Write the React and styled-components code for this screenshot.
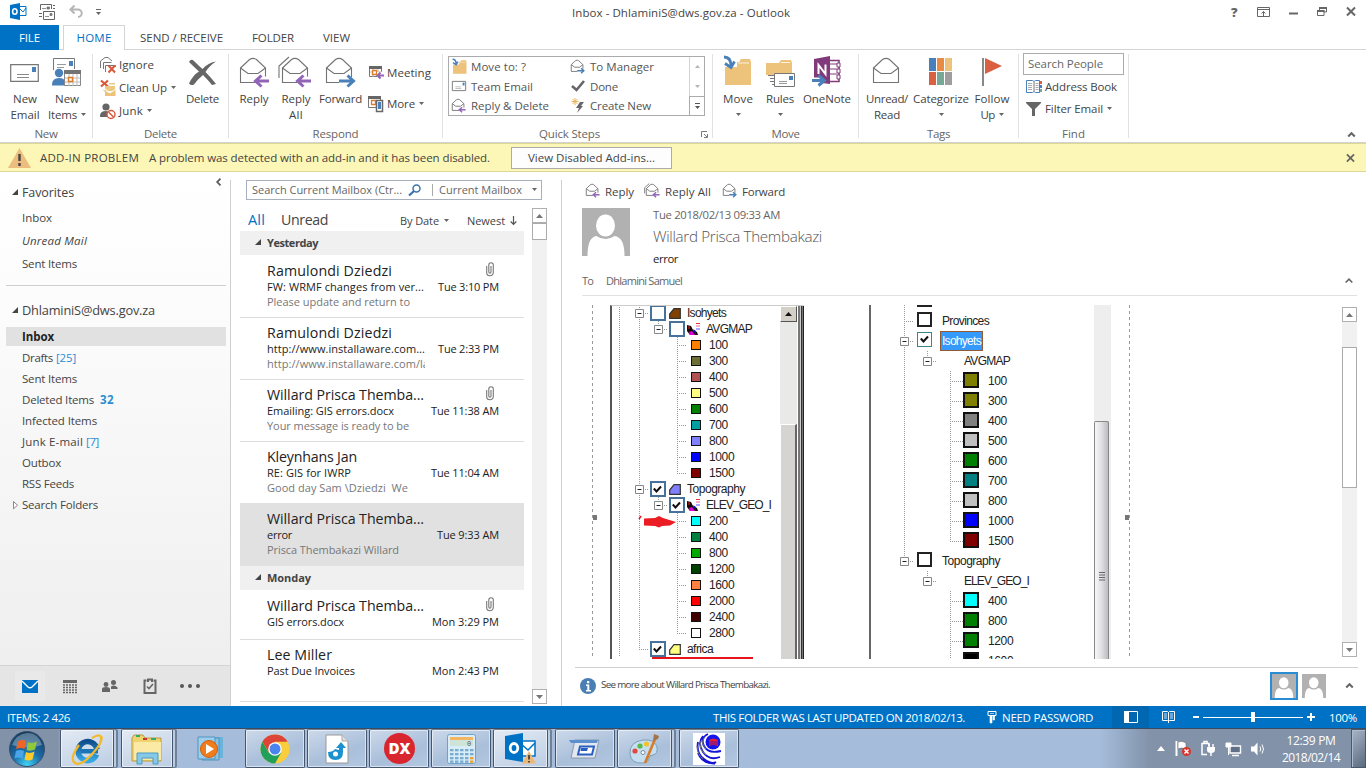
import React, { useLayoutEffect, useRef } from "react";
import styled, { createGlobalStyle, css } from "styled-components";

const GlobalStyle = createGlobalStyle`
  * { box-sizing: border-box; }
  body { margin: 0; overflow: hidden; background: #fff; }
  body, button { font-family: "Open Sans", "Noto Sans", sans-serif; font-size: 11.5px; color: #444; }
`;

/* ---------- text ---------- */
const Txt = styled.span`
  display: inline-block;
  flex: none;
  justify-self: start;
  white-space: pre;
  font-size: ${(p) => p.$size || 11.5}px;
  font-weight: ${(p) => p.$weight || 400};
  font-style: ${(p) => (p.$italic ? "italic" : "normal")};
  color: ${(p) => p.$color || "inherit"};
  ${(p) => p.$family && css`font-family: ${p.$family};`}
`;

function Text({ w, children, ...rest }) {
  const ref = useRef(null);
  useLayoutEffect(() => {
    const el = ref.current;
    if (!w || !el) return;
    el.style.letterSpacing = "0px";
    const natural = el.getBoundingClientRect().width;
    el.style.letterSpacing = (w - natural) / el.textContent.length + "px";
  }, [w, children]);
  return <Txt ref={ref} {...rest}>{children}</Txt>;
}

const Svg = styled.svg`
  display: block;
  flex: none;
  overflow: visible;
`;

const Caret = ({ c = "#666" }) => (
  <Svg width="5" height="3" viewBox="0 0 5 3"><path d="M0 0h5L2.500 3z" fill={c} /></Svg>
);

/* ---------- icons ---------- */
const OpenMail = ({ w = 26, arrow, all, fill = "#fff" }) => {
  const small = w < 20;
  const sw = small ? 1.9 : 1.1;
  return (
    <Svg width={w + (small ? 2 : 3)} height={w + (small ? 1 : 4)} viewBox={small ? "0 0 32 30" : "0 0 29 30"}>
      {all && <path d="M-3 20V8L7 -1" fill="none" stroke="#737373" strokeWidth={sw} />}
      <path d="M.5 10 9.500 1.500Q13 -.8 16.500 1.500L25.500 10V24.500H.5z" fill={fill} stroke="#737373" strokeWidth={sw} />
      <path d="M.5 10 8 15.500h10L25.500 10" fill="none" stroke="#737373" strokeWidth={sw} />
      {arrow === "left" && <g><path d="M15 18.500h15v9H15z" fill={fill} /><path d="M29 23H16M21.500 17.500 15.500 23l6 5.500" fill="none" stroke="#9264b8" strokeWidth="3" /></g>}
      {arrow === "right" && <g><path d="M13 19h14v9H13z" fill={fill} /><path d="M13 23h14M21.500 17.500l6 5.500-6 5.500" fill="none" stroke="#4a80b9" strokeWidth="3" /></g>}
    </Svg>
  );
};
const Mail = ({ w = 29, h = 18 }) => (
  <Svg width={w} height={h} viewBox="0 0 29 18" preserveAspectRatio="none">
    <path d="M.7.7h27.600v16.600H.7z" fill="#fff" stroke="#777" strokeWidth={w < 20 ? 1.8 : 1.2} />
    <path d="M22 3h4v5h-4z" fill="#4a80b9" /><path d="M7 10.500h12M7 13.500h12" stroke="#888" />
  </Svg>
);
const NewItems = () => (
  <Svg width="29" height="29" viewBox="0 0 29 29">
    <path d="M1.500 12V.5h21V11" fill="#fff" stroke="#777" /><path d="M17 3h4v5h-4z" fill="#4a80b9" />
    <path d="M5 6.500h9M5 9.500h7" stroke="#999" />
    <circle cx="7" cy="15" r="4.200" fill="#4a80b9" /><path d="M0 27q0-7 7-7 5 0 6 3v4.500H0z" fill="#4a80b9" />
    <path d="M12.500 12.500h16v15h-16z" fill="#fff" stroke="#888" /><path d="M12 12h17v4H12z" fill="#737373" />
    <path d="M13 20h15M13 24h15M17 16v12M21 16v12M25 16v12" stroke="#bbb" /><path d="M16.500 19.500h4v4h-4z" fill="#fff" stroke="#e07b28" strokeWidth="1.500" />
  </Svg>
);
const IgnoreIcon = () => (
  <Svg width="16" height="16" viewBox="0 0 16 16"><path d="M.5 11V4L5 .5h3L12 4" fill="none" stroke="#777" /><path d="M3.500 12V5.500h8M5.500 15V8.500h10V10" fill="none" stroke="#777" />
    <path d="m8.500 8.500 6.500 7m0-7-6.500 7" stroke="#d9583b" strokeWidth="2" /></Svg>
);
const CleanIcon = () => (
  <Svg width="16" height="16" viewBox="0 0 16 16"><path d="M1 .5l7 6m0-6-7 6" stroke="#d9583b" strokeWidth="2.200" /><path d="M9 3h6v1.500H9z" fill="#edc880" /><path d="M5 6h10v5H5z" fill="#edc880" /><path d="m2 9 7 4 6.500-3.500V16H5V12z" fill="#edc27a" /><path d="m5 9 5 4 6-4" fill="none" stroke="#fff" /></Svg>
);
const JunkIcon = () => (
  <Svg width="16" height="16" viewBox="0 0 16 16"><circle cx="6" cy="4" r="3.600" fill="#666" /><path d="M0 13q0-5 6-5l4 1-3 5H0z" fill="#666" /><circle cx="11" cy="11.500" r="4" fill="#fff" stroke="#d9583b" strokeWidth="1.400" /><path d="m8.500 9 5 5" stroke="#d9583b" strokeWidth="1.400" /></Svg>
);
const DeleteIcon = () => (
  <Svg width="29" height="27" viewBox="0 0 29 27"><path d="M1 3Q3-1 6 2q5 5 8.500 8Q21 3 28 2.500 21 7 17.500 13q5 5 10.500 12l-4 1q-4-5-9-10-6 5-9 9.500-3 1.500-5-1Q5 16 11 12.500 6 8 1 3z" fill="#666" /></Svg>
);
const MeetingIcon = () => (
  <Svg width="15" height="14" viewBox="0 0 15 14"><path d="M.5.5h12v10H.5z" fill="#fff" stroke="#777" /><path d="M0 0h13v3H0z" fill="#666" /><path d="M4 3v8M9 3v8M1 6h12" stroke="#bbb" /><path d="M3.500 4.500h4v4h-4z" fill="#fff" stroke="#e07b28" strokeWidth="1.300" /><path d="M8 6h7v7H8z" fill="#fff" /><path d="M15 9.500H9M11.500 6.500 8.500 9.500l3 3" fill="none" stroke="#9264b8" strokeWidth="2" /></Svg>
);
const MoreIcon = () => (
  <Svg width="16" height="16" viewBox="0 0 16 16"><path d="M.5.5h12v11H.5z" fill="#fff" stroke="#777" /><path d="M0 0h13v3H0z" fill="#666" /><path d="M3.500 4.500h4v4h-4z" fill="#fff" stroke="#e07b28" strokeWidth="1.300" /><path d="M8.500 4.500h6v11h-6z" fill="#fff" stroke="#666" strokeWidth="1.500" /><path d="M10 6h3v7h-3z" fill="#4a80b9" /></Svg>
);
const Folder = ({ w = 29, h = 28 }) => (
  <Svg width={w} height={h} viewBox="0 0 29 28"><path d="M2 28V10h12V5h2l2-3h9l1 3V28z" fill="#edc27a" /><path d="M15 6h11" stroke="#fff" strokeWidth=".8" />
    <path d="M1 0q7 0 7 9M2 6.500l6 4 3.500-6" fill="none" stroke="#4a80b9" strokeWidth="2.800" /></Svg>
);
const RulesIcon = () => (
  <Svg width="31" height="28" viewBox="0 0 31 28"><path d="M1 16V4h13l2-3h10l1 3v12z" fill="#edc27a" /><path d="M16 3.500h9" stroke="#fff" strokeWidth=".8" /><path d="M3 16.500h7M5 19.500h5M5 22.500h5M7 25.500h3" stroke="#777" /><path d="M9.500 14.500h20v13h-20z" fill="#fff" stroke="#777" /><path d="M24 17h4v4h-4z" fill="#4a80b9" /><path d="M14 22.500h8M14 24.500h8" stroke="#999" /></Svg>
);
const OneNoteIcon = () => (
  <Svg width="30" height="30" viewBox="0 0 30 30"><path d="M16 4.500h11v21H16z" fill="#fff" stroke="#80397b" strokeWidth="1.500" /><path d="M18 8h7M18 13h7M18 18h7" stroke="#80397b" /><path d="M25 7h3v4h-3zM25 13h3v4h-3zM25 19h3v4h-3z" fill="#fff" stroke="#80397b" /><path d="M2 3 18 0v28L2 26z" fill="#80397b" /><path d="M6.500 18V9l7 9V8.500" fill="none" stroke="#fff" strokeWidth="2" /><path d="M-1 21.500h9v6h-9z" fill="#fff" /><path d="M0 24.500h12M6.500 19.500l6 5-6 5" fill="none" stroke="#4a80b9" strokeWidth="3" /></Svg>
);
const CategoryIcon = () => (
  <Svg width="23" height="27" viewBox="0 0 23 27">{["#4a80b9", "#e88c43", "#edc27a", "#d96141", "#76a797", "#9f9d9d"].map((c, i) => <rect key={i} x={(i % 3) * 8} y={i > 2 ? 14 : 0} width="7" height="13" fill={c} />)}</Svg>
);
const FlagIcon = () => (<Svg width="20" height="28" viewBox="0 0 20 28"><path d="M1 0v28" stroke="#888" strokeWidth="2" /><path d="M3 0l17 8L3 16z" fill="#d96141" /></Svg>);
const BookIcon = () => (
  <Svg width="17" height="13" viewBox="0 0 17 13"><path d="M.5 12.500V.5h6l1.500 1 1.500-1h4v12h-4L8 11.500l-1.500 1z" fill="#fff" stroke="#4a80b9" /><path d="M8 2v9" stroke="#777" /><path d="M2 3.500h4M2 5.500h4M2 7.500h4M2 9.500h4M9.500 3.500h3M9.500 5.500h3M9.500 7.500h3M9.500 9.500h3" stroke="#aaa" /><path d="M14 1h2v3h-2z" fill="#d96141" /><path d="M14 5h2v3h-2z" fill="#4a80b9" /><path d="M14 9h2v3h-2z" fill="#76a797" /></Svg>
);
const FilterIcon = () => (<Svg width="15" height="14" viewBox="0 0 15 14"><path d="M0 0h15v1L9 7v7H6V7L0 1z" fill="#666" /></Svg>);
const CheckIcon = () => (<Svg width="14" height="12" viewBox="0 0 14 12"><path d="m1 6 4.500 4L13 1" fill="none" stroke="#666" strokeWidth="2.600" /></Svg>);
const BoltIcon = () => (<Svg width="12" height="15" viewBox="0 0 12 15"><path d="M8 4h4L9 8h2l-6 7 2-5H4z" fill="#666" /><path d="M3 0v7M-.5 3.500h7M.5 1l5 5M5.500 1l-5 5" stroke="#e9ad4f" strokeWidth=".9" /></Svg>);
const Chevron = ({ w = 8, sw = 2 }) => (<Svg width={w} height="5" viewBox="0 0 8 5"><path d="M.7 4.500 4 1.200l3.300 3.300" fill="none" stroke="#666" strokeWidth={sw} /></Svg>);
const Cross = ({ w = 10, sw = 2 }) => (<Svg width={w} height={w - 1} viewBox="0 0 10 9"><path d="m1 .5 8 8m0-8-8 8" stroke="#666" strokeWidth={sw} /></Svg>);
const Person = ({ size }) => (
  <Svg width={size} height={size} viewBox="0 0 48 48"><path d="M0 0h48v48H0z" fill="#b1b1b1" /><ellipse cx="23.500" cy="17.500" rx="9.500" ry="11" fill="#fff" /><path d="M5.500 48q0-19 9-20 4 3 9 3t9-3q10 1 10 20z" fill="#fff" /></Svg>
);
const ClipIcon = () => (<Svg width="8" height="15" viewBox="0 0 8 15"><path d="M.7 4v6.500a3.300 3.300 0 0 0 6.600 0V3a2.200 2.200 0 0 0-4.500 0v7a1 1 0 0 0 2.200 0V4" fill="none" stroke="#777" strokeWidth="1.100" /></Svg>);

/* ---------- title bar ---------- */
const Shell = styled.div`width: 1366px; height: 768px; display: flex; flex-direction: column; overflow: hidden;`;
const TitleBar = styled.header`height: 25px; flex: none; display: grid; grid-template-columns: 572px 1fr 136px; align-items: center;`;
const QuickAccess = styled.div`display: flex; align-items: center; padding-left: 10px; gap: 13px; height: 22px; padding-bottom: 2px;`;
const WinButtons = styled.div`display: flex; align-items: center; justify-content: space-between; padding: 0 10px 2px 1px; height: 22px;`;

function Title() {
  return (
    <TitleBar>
      <QuickAccess>
        <Svg width="16" height="17" viewBox="0 0 16 17"><path d="M8 3.500h8v9H8z" fill="#fff" stroke="#0072c6" /><path d="m9 5 4 4 3-4" fill="none" stroke="#0072c6" /><path d="M0 2 10 0v17L0 15z" fill="#0072c6" /><ellipse cx="4.800" cy="8.500" rx="2.200" ry="2.700" fill="none" stroke="#fff" strokeWidth="1.600" /></Svg>
        <Svg width="17" height="16" viewBox="0 0 17 16"><path d="M1.500 6V.5h11V5M4.500 7.500h11v8h-11z" fill="#fff" stroke="#666" /><path d="M3 4.500h4M8 3h2.500v2H8zM6 12.500h4M11 9.500h2v2h-2z" stroke="#777" fill="#777" strokeWidth=".8" /><path d="M0 9.500h3M0 12.500h3M14 1.500h2M14 4.500h2" stroke="#666" /></Svg>
        <Svg width="14" height="13" viewBox="0 0 14 13"><path d="M5.500.5 1.500 4.500l4 4M2 4.500h7a3.700 3.700 0 0 1 0 7.500" fill="none" stroke="#b5b5b5" strokeWidth="2" /></Svg>
        <Svg width="5" height="6" viewBox="0 0 5 6"><path d="M0 .5h5" stroke="#666" /><path d="M0 3h5L2.500 6z" fill="#666" /></Svg>
      </QuickAccess>
      <Text w={218}>Inbox - DhlaminiS@dws.gov.za - Outlook</Text>
      <WinButtons>
        <Text $weight={800} $size={13} $color="#666">?</Text>
        <Svg width="13" height="10" viewBox="0 0 13 10"><path d="M.5.5h12v9H.5zM.5 2.500h12M6.500 9V4.500M4.500 6.500l2-2 2 2" fill="none" stroke="#666" /></Svg>
        <Svg width="9" height="6" viewBox="0 0 9 6"><path d="M0 4.500h9" stroke="#666" strokeWidth="2" /></Svg>
        <Svg width="10" height="9" viewBox="0 0 10 9"><path d="M2.500 3V1h7v4H7M.5 3.500h6.500v5H.5z" fill="none" stroke="#666" /><path d="M2 1h8M0 4h7.500" stroke="#666" strokeWidth="2" /></Svg>
        <Cross />
      </WinButtons>
    </TitleBar>
  );
}

/* ---------- tabs ---------- */
const Tabs = styled.nav`height: 25px; flex: none; display: flex; border-bottom: 1px solid #d4d4d4;`;
const Tab = styled.div`
  width: ${(p) => p.$w}px; height: 25px; margin-left: ${(p) => p.$gap || 0}px;
  display: flex; align-items: center; justify-content: center; padding-bottom: 1px;
  ${(p) => p.$kind === "file" && css`background: #0072c6; color: #fff;`}
  ${(p) => p.$kind === "on" && css`background: #fff; color: #0072c6; border: 1px solid #d4d4d4; border-bottom: 0;`}
`;

/* ---------- ribbon ---------- */
const Ribbon = styled.section`height: 93px; flex: none; display: flex; border-bottom: 1px solid #d2d2d2; position: relative;`;
const Group = styled.div`
  width: ${(p) => p.$w}px; height: 92px; flex: none; display: flex; flex-direction: column; position: relative;
  &::after { content: ""; position: absolute; right: 0; top: 4px; height: 84px; width: 1px; background: #e1e1e1; }
`;
const GroupBody = styled.div`height: 75px; display: flex; padding-left: ${(p) => p.$pad || 0}px;`;
const GroupName = styled.div`height: 16px; display: flex; align-items: center; justify-content: center; color: #666; padding-right: ${(p) => p.$shift || 1}px;`;
const Big = styled.div`width: ${(p) => p.$w}px; padding-top: 6px; display: flex; flex-direction: column; align-items: center;`;
const BigIcon = styled.div`height: 34px; display: flex; align-items: center; justify-content: center; padding: 0 ${(p) => p.$left || 0}px ${(p) => p.$up || 0}px 0;`;
const Line = styled.div`height: 16px; display: flex; align-items: center; gap: 4px;`;
const SmallCol = styled.div`width: ${(p) => p.$w}px; display: flex; flex-direction: column; padding: ${(p) => p.$top || 0}px 0 0 ${(p) => p.$left || 0}px;`;
const Small = styled.div`height: ${(p) => p.$h || 23}px; display: flex; align-items: center; gap: 4px;`;
const IconSlot = styled.div`width: ${(p) => p.$w || 16}px; display: flex; justify-content: center; flex: none;`;
const SmallIcon = styled.div`width: ${(p) => p.$w}px; margin-right: -4px; display: flex; flex: none; padding-left: ${(p) => p.$pad || 0}px;`;

const BigButton = ({ w, icon, a, aw, b, bw, caret, up, left }) => (
  <Big $w={w}><BigIcon $up={up} $left={left}>{icon}</BigIcon><Line><Text w={aw}>{a}</Text></Line>
    <Line>{b && <Text w={bw}>{b}</Text>}{caret && <Caret />}</Line></Big>
);
const SmallButton = ({ icon, t, w, caret, h, slot = 19, pad }) => (<Small $h={h}><SmallIcon $w={slot} $pad={pad}>{icon}</SmallIcon><Text w={w}>{t}</Text>{caret && <Caret />}</Small>);

const Gallery = styled.div`width: 257px; height: 60px; margin-top: 6px; border: 1px solid #ababab; display: grid; grid-template-columns: 119px 1fr 15px;`;
const GalleryCol = styled.div`display: flex; flex-direction: column; padding-left: 2px;`;
const Step = styled.div`height: 19.500px; display: flex; align-items: center; gap: 4px;`;
const Spinner = styled.div`display: grid; grid-template-rows: 19px 20px 19px; border-left: 1px solid #d4d4d4; justify-items: center; align-items: center;
  & > :last-child { border: solid #ababab; border-width: 1px 0 0 1px; margin-left: -1px; width: 15px; height: 20px; display: flex; align-items: center; justify-content: center; }`;
const Launcher = styled.div`position: absolute; right: 5px; bottom: 4px;`;
const SearchPeople = styled.div`width: 101px; height: 22px; margin-top: 3px; border: 1px solid #ababab; padding: 0 4px 1px; display: flex; align-items: center; color: #666;`;
const RibbonFold = styled.div`position: absolute; right: 10px; bottom: 5px;`;
const StepItem = ({ icon, t, w }) => (<Step><IconSlot>{icon}</IconSlot><Text w={w} $color="#555">{t}</Text></Step>);

function RibbonBar() {
  return (
    <Ribbon>
      <Group $w={93}>
        <GroupBody $pad={4}>
          <BigButton w={42} icon={<Mail />} a="New" aw={24} b="Email" bw={29} left={2} />
          <BigButton w={42} icon={<NewItems />} a="New" aw={24} b="Items" bw={29} caret up={2} left={2} />
        </GroupBody><GroupName><Text w={23}>New</Text></GroupName>
      </Group>
      <Group $w={136}>
        <GroupBody $pad={7}>
          <SmallCol $w={78} $top={3}>
            <SmallButton icon={<IgnoreIcon />} t="Ignore" w={35} />
            <SmallButton icon={<CleanIcon />} t="Clean Up" w={48} caret />
            <SmallButton icon={<JunkIcon />} t="Junk" w={24} caret />
          </SmallCol>
          <BigButton w={49} icon={<DeleteIcon />} a="Delete" aw={33} up={2} />
        </GroupBody><GroupName><Text w={33}>Delete</Text></GroupName>
      </Group>
      <Group $w={214}>
        <GroupBody $pad={4}>
          <BigButton w={42} icon={<OpenMail arrow="left" />} a="Reply" aw={29} />
          <BigButton w={42} icon={<OpenMail arrow="left" all />} a="Reply" aw={29} b="All" bw={14} />
          <BigButton w={47} icon={<OpenMail arrow="right" />} a="Forward" aw={43} />
          <SmallCol $w={74} $top={7} $left={4}>
            <SmallButton icon={<MeetingIcon />} t="Meeting" w={44} h={31} pad={1} />
            <SmallButton icon={<MoreIcon />} t="More" w={28} h={31} caret />
          </SmallCol>
        </GroupBody><GroupName><Text w={46}>Respond</Text></GroupName>
      </Group>
      <Group $w={270}>
        <GroupBody $pad={5}>
          <Gallery>
            <GalleryCol>
              <StepItem icon={<Folder w={15} h={15} />} t="Move to: ?" w={55} />
              <StepItem icon={<Mail w={14} h={10} />} t="Team Email" w={62} />
              <StepItem icon={<OpenMail w={13} arrow="left" />} t="Reply & Delete" w={78} />
            </GalleryCol>
            <GalleryCol>
              <StepItem icon={<OpenMail w={13} arrow="right" />} t="To Manager" w={64} />
              <StepItem icon={<CheckIcon />} t="Done" w={28} />
              <StepItem icon={<BoltIcon />} t="Create New" w={61} />
            </GalleryCol>
            <Spinner>
              <Svg width="5" height="3"><path d="M0 3h5L2.500 0z" fill="#b5b5b5" /></Svg>
              <Caret c="#b5b5b5" />
              <div><Svg width="5" height="6"><path d="M0 .5h5" stroke="#555" /><path d="M0 3h5L2.500 6z" fill="#555" /></Svg></div>
            </Spinner>
          </Gallery>
        </GroupBody><GroupName $shift={17}><Text w={61}>Quick Steps</Text></GroupName>
        <Launcher><Svg width="7" height="7"><path d="M.5 6V.5H6M3 3l3 3M6.500 3v3.500H3" fill="none" stroke="#777" /></Svg></Launcher>
      </Group>
      <Group $w={146}>
        <GroupBody $pad={4}>
          <BigButton w={42} icon={<Folder />} a="Move" aw={30} caret up={4} left={2} />
          <BigButton w={42} icon={<RulesIcon />} a="Rules" aw={28} caret />
          <BigButton w={52} icon={<OneNoteIcon />} a="OneNote" aw={48} up={4} />
        </GroupBody><GroupName><Text w={28}>Move</Text></GroupName>
      </Group>
      <Group $w={160}>
        <GroupBody $pad={4}>
          <BigButton w={48} icon={<OpenMail />} a="Unread/" aw={42} b="Read" bw={26} />
          <BigButton w={60} icon={<CategoryIcon />} a="Categorize" aw={56} caret up={4} left={1} />
          <BigButton w={42} icon={<FlagIcon />} a="Follow" aw={35} b="Up" bw={14} caret up={2} />
        </GroupBody><GroupName><Text w={23}>Tags</Text></GroupName>
      </Group>
      <Group $w={110}>
        <GroupBody $pad={4}>
          <SmallCol $w={104}>
            <SearchPeople><Text w={75}>Search People</Text></SearchPeople>
            <SmallButton icon={<BookIcon />} t="Address Book" w={72} h={22} slot={22} pad={3} />
            <SmallButton icon={<FilterIcon />} t="Filter Email" w={58} caret slot={22} pad={3} />
          </SmallCol>
        </GroupBody><GroupName><Text w={23}>Find</Text></GroupName>
      </Group>
      <RibbonFold><Chevron w={9} /></RibbonFold>
    </Ribbon>
  );
}

/* ---------- notice ---------- */
const Notice = styled.div`height: 29px; flex: none; display: flex; align-items: center; background: #fcf7b6; border: solid #dbd796; border-width: 1px 0; padding: 0 11px 0 8px;`;
const NoticeText = styled.div`display: flex; gap: 10px; margin-left: 9px; flex: 1; align-items: center;`;
const NoticeButton = styled.button`width: 161px; height: 22px; margin-left: 11px; padding: 0; border: 1px solid #ababab; background: #fdfdfd; display: flex; align-items: center; justify-content: center;`;

/* ---------- navigation pane ---------- */
const Main = styled.main`height: 534px; flex: none; display: grid; grid-template-columns: 231px 331px 1fr;`;
const Nav = styled.aside`display: flex; flex-direction: column; background: linear-gradient(#fff, #fcfcfc 25%, #efefef 92%); position: relative;
  &::after { content: ""; position: absolute; right: 0; top: 8px; bottom: 1px; width: 1px; background: #d0d0d0; }`;
const NavHead = styled.div`display: flex; align-items: center; gap: 4px; height: 22px; padding-left: 12px; margin-top: ${(p) => p.$mt || 0}px; margin-bottom: ${(p) => p.$mb || 0}px;`;
const NavRow = styled.div`
  height: ${(p) => p.$h || 21}px; margin: 0 5px 0 6px; padding-left: ${(p) => (p.$arrow ? 7 : 16)}px; display: flex; align-items: center;
  ${(p) => p.$on && css`background: linear-gradient(#e1e1e1, #e1e1e1) 0 1px / 100% 19px no-repeat; color: #222;`}
`;
const Count = styled.span`display: flex; margin-left: ${(p) => p.$gap}px; color: #2a8dd4;`;
const NavRule = styled.hr`width: 220px; margin: 10px 0 0 6px; border: 0; height: 1px; background: #cfcfcf;`;
const NavFill = styled.div`flex: 1;`;
const NavFoot = styled.div`height: 41px; background: #e5e5e5; border-top: 1px solid #d4d4d4; display: flex; align-items: center; padding-left: 15px;`;
const Module = styled.div`width: 30px; height: 30px; margin-right: 10px; display: flex; align-items: center; justify-content: center; background: ${(p) => (p.$on ? "#e9e9e9" : "none")};`;
const Fold = styled.div`position: absolute; right: 10px; top: 6px;`;
const Tri = () => (<Svg width="6" height="6"><path d="M6 0v6H0z" fill="#444" /></Svg>);

const folders = [["Drafts", 31, "[25]", 20], ["Sent Items", 55], ["Deleted Items", 72, "32", 14, 700], ["Infected Items", 75], ["Junk E-mail", 61, "[7]", 13], ["Outbox", 39], ["RSS Feeds", 52]];

function NavPane() {
  return (
    <Nav>
      <Fold><Svg width="5" height="8"><path d="M4.500.7 1.200 4l3.300 3.300" fill="none" stroke="#555" strokeWidth="1.700" /></Svg></Fold>
      <NavHead $mt={9} $mb={3}><Tri /><Text w={52} $size={12.5}>Favorites</Text></NavHead>
      <NavRow $h={23}><Text w={30}>Inbox</Text></NavRow>
      <NavRow $h={23}><Text w={65} $italic>Unread Mail</Text></NavRow>
      <NavRow $h={23}><Text w={55}>Sent Items</Text></NavRow>
      <NavRule />
      <NavHead $mt={13} $mb={5}><Tri /><Text w={133} $size={12.8}>DhlaminiS@dws.gov.za</Text></NavHead>
      <NavRow $on><Text w={32} $weight={700}>Inbox</Text></NavRow>
      {folders.map(([t, w, n, nw, wt], i) => (
        <NavRow key={i}><Text w={w}>{t}</Text>{n && <Count $gap={wt ? 6 : 3}><Text w={nw} $weight={wt}>{n}</Text></Count>}</NavRow>
      ))}
      <NavRow $arrow><Svg width="9" height="8"><path d="M.5.5 4.500 4.200.5 7.800z" fill="#fff" stroke="#888" /></Svg><Text w={76}>Search Folders</Text></NavRow>
      <NavFill />
      <NavFoot>
        <Module $on><Svg width="16" height="13"><path d="M0 0h16v13H0z" fill="#0072c6" /><path d="m0 1 6 6q2 1.500 4 0l6-6" fill="none" stroke="#fff" strokeWidth="1.400" /></Svg></Module>
        <Module><Svg width="14" height="13"><path d="M0 0h14v3H0z" fill="#666" /><path d="M0 5h14M0 7.500h14M0 10h14M0 12.500h14" stroke="#666" strokeWidth="1.500" strokeDasharray="2 1" /></Svg></Module>
        <Module><Svg width="16" height="12"><circle cx="4" cy="4.500" r="2.400" fill="#666" /><circle cx="11.500" cy="2.500" r="2.500" fill="#666" /><path d="M0 12V9q0-2 4-2t4 2v3zM9 9V7q0-1.500 2.500-1.500T15.500 7.500V9z" fill="#666" /></Svg></Module>
        <Module><Svg width="14" height="16"><path d="M1.500 2.500h11v12.500h-11z" fill="none" stroke="#666" strokeWidth="2" /><path d="M3.500 0h7v4h-7z" fill="#e5e5e5" /><path d="M5 4V1.500h4V4" fill="none" stroke="#666" strokeWidth="2" /><path d="m4 8.500 2 2 4-4.500" fill="none" stroke="#666" strokeWidth="1.600" /></Svg></Module>
        <Module><Svg width="20" height="4"><circle cx="2" cy="2" r="2" fill="#555" /><circle cx="10" cy="2" r="2" fill="#555" /><circle cx="18" cy="2" r="2" fill="#555" /></Svg></Module>
      </NavFoot>
    </Nav>
  );
}

/* ---------- message list ---------- */
const ListPane = styled.section`display: flex; flex-direction: column; padding: 8px 0 0 9px; position: relative;
  &::after { content: ""; position: absolute; right: 0; top: 8px; bottom: 0; width: 1px; background: #d0d0d0; }`;
const SearchBox = styled.div`width: 296px; height: 20px; margin-left: 6px; flex: none; border: 1px solid #a9b0bd; display: flex; align-items: center; padding: 0 4px 1px 5px; color: #666;`;
const SearchSep = styled.span`width: 1px; height: 12px; background: #aaa; margin: 0 6px;`;
const ListBody = styled.div`display: flex; flex: 1; min-height: 0;`;
const List = styled.div`width: 284px; overflow: hidden; display: flex; flex-direction: column;`;
const Sort = styled.div`height: 31px; flex: none; display: flex; align-items: center; padding: 8px 0 0 8px;`;
const SortRight = styled.div`display: flex; align-items: center; margin-left: 72px; padding-top: 2px;`;
const DayHead = styled.div`height: 24px; flex: none; background: #f0f0f0; display: flex; align-items: center; padding: 0 0 2px 15px; gap: 6px;`;
const Item = styled.article`
  height: ${(p) => p.$h}px; flex: none; padding: 5px 25px 0 27px; border-bottom: 1px solid ${(p) => p.$line || "#dcdcdc"};
  background: ${(p) => (p.$on ? "#e1e1e1" : "#fff")}; color: #222;
`;
const ItemLine = styled.div`height: ${(p) => p.$h}px; display: flex; align-items: center; justify-content: space-between; padding-top: ${(p) => p.$down || 0}px; padding-bottom: ${(p) => p.$up || 0}px;`;
const ClipSlot = styled.div`padding: 0 5px 2px 0;`;
const Preview = styled.div`height: 15px; width: 158px; overflow: hidden; display: flex; align-items: center; color: #777; padding-bottom: ${(p) => p.$up || 0}px;`;
const Scroll = styled.div`
  width: 15px; margin: ${(p) => p.$m}; background: #f1f1f1; display: flex; flex-direction: column; flex: none;
  ${(p) => p.$h && css`height: ${p.$h}px;`}
`;
const ScrollBtn = styled.div`height: 15px; flex: none; border: 1px solid #b0b0b0; background: #fff; display: flex; align-items: center; justify-content: center;`;
const Thumb = styled.div`height: ${(p) => p.$h}px; margin-top: ${(p) => p.$mt || 0}px; border: 1px solid #ababab; background: #fff;`;
const Spacer = styled.div`flex: 1;`;

function MessageItem({ h = 62, name, nw, sub, sw, time, tw, prev, pw, clip, on, line, down, tight }) {
  return (
    <Item $h={h} $on={on} $line={line}>
      <ItemLine $h={20} $up={down ? 0 : 1} $down={down}><Text w={nw} $size={14.2}>{name}</Text>{clip && <ClipSlot><ClipIcon /></ClipSlot>}</ItemLine>
      <ItemLine $h={14} $up={tight ? 3 : 2}><Text w={sw} $size={11}>{sub}</Text><Text w={tw} $size={11}>{time}</Text></ItemLine>
      {prev && <Preview $up={tight ? 2 : 0}><Text w={pw} $size={11}>{prev}</Text></Preview>}
    </Item>
  );
}

function MessageList() {
  return (
    <ListPane>
      <SearchBox>
        <Text w={150} $size={11}>Search Current Mailbox (Ctr...</Text>
        <IconSlot $w={24}><Svg width="13" height="12"><circle cx="8.500" cy="4.500" r="3.500" fill="#fff" stroke="#3f73ae" strokeWidth="1.500" /><path d="M6 7 1 11.500" stroke="#3f73ae" strokeWidth="2.300" /></Svg></IconSlot>
        <SearchSep /><Text w={83} $size={11}>Current Mailbox</Text><Spacer /><Caret />
      </SearchBox>
      <ListBody>
        <List>
          <Sort>
            <Text w={17} $size={14.5} $color="#0072c6">All</Text><IconSlot /><Text w={47} $size={14.2}>Unread</Text>
            <SortRight><Text w={39} $size={11}>By Date</Text><IconSlot $w={15}><Caret /></IconSlot><IconSlot $w={13} /><Text w={38} $size={11}>Newest</Text>
              <IconSlot><Svg width="7" height="9"><path d="M3.500 0v8M.7 5.500l2.800 2.800 2.800-2.800" fill="none" stroke="#555" strokeWidth="1.200" /></Svg></IconSlot></SortRight>
          </Sort>
          <DayHead><Tri /><Text w={51} $weight={700} $size={11}>Yesterday</Text></DayHead>
          <MessageItem h={63} name="Ramulondi Dziedzi" nw={125} sub="FW: WRMF changes from ver..." sw={157} time="Tue 3:10 PM" tw={61} prev="Please update and return to" pw={143} clip down={1} />
          <MessageItem name="Ramulondi Dziedzi" nw={125} sub="http://www.installaware.com..." sw={158} time="Tue 2:33 PM" tw={61} prev="http://www.installaware.com/la" pw={162} tight />
          <MessageItem name="Willard Prisca Themba..." nw={157} sub="Emailing: GIS errors.docx" sw={127} time="Tue 11:38 AM" tw={68} prev="Your message is ready to be" pw={142} clip tight />
          <MessageItem h={61} name="Kleynhans Jan" nw={90} sub="RE: GIS for IWRP" sw={84} time="Tue 11:04 AM" tw={68} prev="Good day Sam \Dziedzi  We" pw={141} line="#fff" tight />
          <MessageItem h={63} name="Willard Prisca Themba..." nw={157} sub="error" sw={25} time="Tue 9:33 AM" tw={62} prev="Prisca Thembakazi Willard" pw={132} on line="#e1e1e1" down={1} />
          <DayHead><Tri /><Text w={44} $weight={700} $size={11}>Monday</Text></DayHead>
          <MessageItem h={50} name="Willard Prisca Themba..." nw={157} sub="GIS errors.docx" sw={77} time="Mon 3:29 PM" tw={67} clip down={1} />
          <MessageItem name="Lee Miller" nw={65} sub="Past Due Invoices" sw={88} time="Mon 2:43 PM" tw={67} tight />
        </List>
        <Scroll $m="8px 0 2px 8px">
          <ScrollBtn><Svg width="7" height="4"><path d="M0 4h7L3.500 0z" fill="#777" /></Svg></ScrollBtn><Thumb $h={17} /><Spacer />
          <ScrollBtn><Svg width="7" height="4"><path d="M0 0h7L3.500 4z" fill="#777" /></Svg></ScrollBtn>
        </Scroll>
      </ListBody>
    </ListPane>
  );
}

/* ---------- reading pane ---------- */
const Reader = styled.section`display: flex; flex-direction: column; padding-top: 10px; min-width: 0;`;
const Actions = styled.div`height: 20px; display: flex; align-items: center; padding: 0 0 2px 24px; flex: none;`;
const Action = styled.div`display: flex; align-items: center; gap: 4px; margin-right: 12px;`;
const Head = styled.div`display: flex; padding: 6px 0 0 20px; flex: none; height: 60px;`;
const HeadText = styled.div`display: flex; flex-direction: column; margin-left: 23px; margin-top: -2px;`;
const HeadLine = styled.div`height: ${(p) => p.$h}px; display: flex; flex: none; align-items: center; padding-bottom: ${(p) => p.$pb || 0}px;`;
const ToRow = styled.div`height: 34px; margin: 0 9px 0 20px; border-bottom: 1px solid #e1e1e1; display: flex; align-items: center; gap: 13px; padding: 3px 3px 0 0; color: #666; flex: none;
  & > :last-child { margin-left: auto; }`;
const Content = styled.div`height: 354px; margin-top: 9px; display: flex; padding-left: 30px; flex: none;`;
const Attachment = styled.div`width: 538px; display: flex; position: relative; background:
  repeating-linear-gradient(#999 0 3px, transparent 3px 6px) 0 0 / 1px 100% no-repeat,
  repeating-linear-gradient(#999 0 3px, transparent 3px 6px) 100% 0 / 1px 100% no-repeat;`;
const Handle = styled.i`position: absolute; top: 210px; width: 4px; height: 5px; background: #777; ${(p) => p.$side}: 1px;`;
const InfoBar = styled.footer`height: 39px; margin: 8px 8px 0 13px; border-top: 1px solid #d0d0d0; display: flex; align-items: center; padding: 0 4px 3px 5px; flex: none;`;
const InfoText = styled.div`padding: 0 0 2px 5px; display: flex;`;
const People = styled.div`display: flex; align-items: center; gap: 6px; margin-left: auto; margin-right: 19px;`;
const Face = styled.div`outline: ${(p) => (p.$on ? "2px solid #2a8dd4" : "none")};`;

/* the two legend trees */
const bitmap = '"Liberation Sans", Arial, sans-serif';
const LeftPanel = styled.div`width: 194px; margin-left: 18px; border-left: 2px solid #555; display: flex; overflow: hidden; border-top: 1px solid #ccc;`;
const RightPanel = styled.div`width: 242px; margin-left: 65px; border-left: 2px solid #666; display: flex; overflow: hidden;`;
const Tree = styled.div`flex: none; width: ${(p) => p.$w}px; margin-top: ${(p) => p.$mt}px; display: flex; flex-direction: column;`;
const TreeRow = styled.div`height: ${(p) => p.$h}px; flex: none; display: flex; align-items: center; color: #222; position: relative;`;
const Cell = styled.div`width: ${(p) => p.$w}px; height: 100%; flex: none; display: flex; align-items: center; justify-content: ${(p) => (p.$start ? "flex-start" : "center")}; padding-left: ${(p) => p.$left || 0}px;`;
const Swatch = styled.i`width: ${(p) => p.$s}px; height: ${(p) => p.$s}px; background: ${(p) => p.$c}; border: ${(p) => p.$b}px solid #111; flex: none;
  ${(p) => p.$lift && css`margin-bottom: 3px;`}`;
const Box = styled.i`width: ${(p) => p.$s}px; height: ${(p) => p.$s}px; border: ${(p) => p.$b}px solid ${(p) => p.$c}; background: #fff; display: flex; align-items: center; justify-content: center; flex: none;
  ${(p) => p.$lift && css`margin-bottom: 3px;`}`;
const Selected = styled.div`background: #3598fb; color: #fff; border: 1px solid #935a32; padding: 2px 1px; height: 20px; display: flex; align-items: center;`;
const RedArrow = styled.div`position: absolute; left: 26px; top: 1px;`;
const RedRule = styled.div`height: 2px; margin: 0 0 0 40px; width: 101px; background: #e8141c;`;
const OldScroll = styled.div`width: 17px; background: #e9e9e7; display: flex; flex-direction: column; flex: none;`;
const OldButton = styled.div`height: 16px; border: 1px solid; border-color: #fff #555 #555 #fff; background: #d4d0c8; display: flex; align-items: center; justify-content: center;`;
const OldThumb = styled.div`margin-top: 102px; flex: 1; background: #d5d4d0; border: solid; border-width: 1px 2px 0 1px; border-color: #fff #666 #fff #fff;`;
const Edge = styled.div`width: 7px; background: linear-gradient(90deg, #fff 0 1px, #777 1px 3px, #ccc 3px 4px, #333 4px 5px, #777 5px 6px, #222 6px 7px);`;
const NewScroll = styled.div`width: 17px; margin-left: auto; background: #eee; display: flex; flex-direction: column; padding-top: 116px;`;
const NewThumb = styled.div`width: 15px; flex: 1; border: 1px solid #888; border-bottom: 0; border-radius: 2px 2px 0 0; background: linear-gradient(90deg, #f7f7f7, #e0e0e4 50%, #bbbcc0); padding: 150px 0 0 4px;`;

const Guide = ({ w, x, h, kind = "v" }) => (
  <Svg width={w} height={h}>
    <g stroke="#999" strokeDasharray="1 1" fill="none">
      {kind !== "none" && <path d={`M${x}.5 0V${kind === "end" || kind === "boxend" ? h / 2 : h}`} />}
      {kind !== "none" && kind !== "v" && <path d={`M${x} ${h / 2 + 0.5}H${w}`} />}
    </g>
    {kind.startsWith("box") && <g><path d={`M${x - 3.5} ${h / 2 - 3.5}h8v8h-8z`} fill="#fff" stroke="#888" /><path d={`M${x - 1.5} ${h / 2 + 0.5}h4`} stroke="#222" /></g>}
  </Svg>
);
const Tick = ({ on, s = 16, b = 2, c = "#46729c", lift }) => (<Box $s={s} $b={b} $c={c} $lift={lift}>{on && <Svg width="9" height="9"><path d="m.8 3.500 2.700 3L8 1.500" fill="none" stroke="#111" strokeWidth="2" /></Svg>}</Box>);
const Poly = ({ c }) => (<Svg width="12" height="11"><path d="M.7 10.300V6L5 .7h6.300v9.600z" fill={c} stroke="#333" strokeWidth="1.200" /></Svg>);
const Raster = () => (<Svg width="14" height="13"><path d="M0 2 4 3l2 4 4 2 1 3H3L0 8z" fill="#160909" /><path d="M2 9l3-1 3 4H3z" fill="#d0d" /><path d="M6 6l3 2v4z" fill="#11c" /><path d="M1 3h2v3H1z" fill="#811" /><path d="M9 .5h4" stroke="#e33" /><path d="M9 3h4" stroke="#e6a" /><path d="M9 6h4" stroke="#55f" /></Svg>);
const TreeText = ({ children, w }) => <Text w={w} $size={12} $family={bitmap}>{children}</Text>;

const numW = (t) => t.length * 6.3;
function LeftParent({ t, w, c, on, kind = "box" }) {
  return (<TreeRow $h={16}><Guide w={17} x={7} h={16} /><Guide w={19} x={10} h={16} kind={kind} /><Cell $w={19}><Tick on={on} /></Cell><Cell $w={20} $start $left={2}><Poly c={c} /></Cell><TreeText w={w}>{t}</TreeText></TreeRow>);
}
function LeftLayer({ t, w, on }) {
  return (<TreeRow $h={16}><Guide w={17} x={7} h={16} /><Guide w={19} x={10} h={16} /><Guide w={19} x={10} h={16} kind="boxend" /><Cell $w={19}><Tick on={on} /></Cell><Cell $w={20} $start $left={1}><Raster /></Cell><TreeText w={w}>{t}</TreeText></TreeRow>);
}
function LeftClass({ t, c, last, arrow }) {
  return (<TreeRow $h={16}><Guide w={17} x={7} h={16} /><Guide w={19} x={10} h={16} /><Cell $w={19} /><Guide w={19} x={10} h={16} kind={last ? "end" : "tee"} /><Cell $w={23} $start $left={5}><Swatch $s={10} $b={1} $c={c} /></Cell><TreeText w={numW(t)}>{t}</TreeText>
    {arrow && <RedArrow><Svg width="40" height="14"><path d="M3 2 1 5" stroke="#e8141c" strokeWidth="1.500" /><path d="M6 4.500 17 4l4-2 4 2 13 4-6 3.500-8 .5-3 1.500-4-1.500-11-.5z" fill="#ec1c24" /></Svg></RedArrow>}</TreeRow>);
}
function RightClass({ t, c, last, trunk }) {
  return (<TreeRow $h={20}><Cell $w={23} /><Guide w={20} x={10} h={20} kind={trunk ? "v" : "none"} /><Cell $w={26} /><Guide w={23} x={10} h={20} kind={last ? "end" : "tee"} /><Cell $w={25} $start><Swatch $s={16} $b={2} $c={c} $lift /></Cell><TreeText w={numW(t)}>{t}</TreeText></TreeRow>);
}
function RightLayer({ t, w, trunk }) {
  return (<TreeRow $h={20}><Cell $w={23} /><Guide w={20} x={10} h={20} kind={trunk ? "v" : "none"} /><Cell $w={3} /><Guide w={20} x={10} h={20} kind="boxend" /><Cell $w={27} /><TreeText w={w}>{t}</TreeText></TreeRow>);
}
function RightParent({ kind, on, sel, t, w }) {
  return (<TreeRow $h={20}><Cell $w={23} /><Guide w={20} x={10} h={20} kind={kind} /><Cell $w={21}><Tick on={on} s={15} b={on ? 1.5 : 2} c={on ? "#3f8585" : "#222"} lift /></Cell><Cell $w={sel ? 5 : 7} />{sel ? <Selected><TreeText w={w}>{t}</TreeText></Selected> : <TreeText w={w}>{t}</TreeText>}</TreeRow>);
}

const avgLeft = [["100", "#ff8000"], ["300", "#6c6c35"], ["400", "#b05050"], ["500", "#ffff80"], ["600", "#008000"], ["700", "#00a0a0"], ["800", "#8080ff"], ["1000", "#0000ff"], ["1500", "#800000"]];
const elevLeft = [["200", "#00ffff"], ["400", "#008040"], ["800", "#00a800"], ["1200", "#004000"], ["1600", "#ff8040"], ["2000", "#ff0000"], ["2400", "#400000"], ["2800", "#ffffff"]];
const avgRight = [["100", "#808000"], ["300", "#808000"], ["400", "#808080"], ["500", "#c0c0c0"], ["600", "#008000"], ["700", "#008080"], ["800", "#c0c0c0"], ["1000", "#0000ff"], ["1500", "#800000"]];
const elevRight = [["400", "#00ffff"], ["800", "#008000"], ["1200", "#008000"], ["1600", "#000000"]];

function Legend() {
  return (
    <Attachment>
      <Handle $side="left" /><Handle $side="right" />
      <LeftPanel>
        <Tree $w={168} $mt={-1}>
          <LeftParent t="Isohyets" w={39} c="#804000" />
          <LeftLayer t="AVGMAP" w={46} />
          {avgLeft.map(([t, c], i) => <LeftClass key={i} t={t} c={c} last={i === 8} />)}
          <LeftParent t="Topography" w={58} c="#8080ff" on />
          <LeftLayer t="ELEV_GEO_I" w={65} on />
          {elevLeft.map(([t, c], i) => <LeftClass key={i} t={t} c={c} last={i === 7} arrow={i === 0} />)}
          <LeftParent t="africa" w={26} c="#ffff80" on kind="end" />
          <RedRule />
        </Tree>
        <OldScroll><OldButton><Svg width="7" height="4"><path d="M0 4h7L3.500 0z" fill="#111" /></Svg></OldButton><OldThumb /></OldScroll>
        <Edge />
      </LeftPanel>
      <RightPanel>
        <Tree $w={205} $mt={-14}>
          <RightParent kind="v" t="National Roads" w={75} />
          <RightParent kind="tee" t="Provinces" w={47} />
          <RightParent kind="box" t="Isohyets" w={39} on sel />
          <RightLayer t="AVGMAP" w={46} trunk />
          {avgRight.map(([t, c], i) => <RightClass key={i} t={t} c={c} last={i === 8} trunk />)}
          <RightParent kind="boxend" t="Topography" w={58} />
          <RightLayer t="ELEV_GEO_I" w={65} />
          {elevRight.map(([t, c], i) => <RightClass key={i} t={t} c={c} />)}
        </Tree>
        <NewScroll><NewThumb><Svg width="6" height="9"><path d="M0 .5h6M0 3h6M0 5.500h6M0 8h6" stroke="#666" /></Svg></NewThumb></NewScroll>
      </RightPanel>
    </Attachment>
  );
}

function ReadingPane() {
  return (
    <Reader>
      <Actions>
        <Action><OpenMail w={13} arrow="left" /><Text w={29}>Reply</Text></Action>
        <Action><OpenMail w={13} arrow="left" all /><Text w={46}>Reply All</Text></Action>
        <Action><OpenMail w={13} arrow="right" /><Text w={43}>Forward</Text></Action>
      </Actions>
      <Head>
        <Person size={48} />
        <HeadText>
          <HeadLine $h={16}><Text w={127} $size={11.3} $color="#666">Tue 2018/02/13 09:33 AM</Text></HeadLine>
          <HeadLine $h={29} $pb={2}><Text w={169} $size={15.2} $weight={300} $color="#555">Willard Prisca Thembakazi</Text></HeadLine>
          <HeadLine $h={15}><Text w={25} $size={11.3} $weight={500} $color="#222">error</Text></HeadLine>
        </HeadText>
      </Head>
      <ToRow><Text w={11} $size={11}>To</Text><Text w={76} $size={11}>Dhlamini Samuel</Text><Chevron w={10} sw={1.6} /></ToRow>
      <Content>
        <Legend />
        <Scroll $m="2px 0 0 212px" $h={350}>
          <ScrollBtn><Svg width="7" height="4"><path d="M0 4h7L3.500 0z" fill="#777" /></Svg></ScrollBtn><Thumb $h={141} $mt={25} /><Spacer />
          <ScrollBtn><Svg width="7" height="4"><path d="M0 0h7L3.500 4z" fill="#777" /></Svg></ScrollBtn>
        </Scroll>
      </Content>
      <InfoBar>
        <Svg width="16" height="16"><circle cx="8" cy="8" r="8" fill="#4a7fb5" /><path d="M7 3h2.300v2.300H7zM6 6.500h3.300V12H11v1.500H6V12h1.300V8H6z" fill="#fff" /></Svg>
        <InfoText><Text w={169} $size={9.8}>See more about Willard Prisca Thembakazi.</Text></InfoText>
        <People><Face $on><Person size={24} /></Face><Face><Person size={24} /></Face></People>
        <Chevron w={9} />
      </InfoBar>
    </Reader>
  );
}

/* ---------- status bar ---------- */
const Status = styled.div`height: 22px; flex: none; background: #0072c6; color: #fff; display: flex; align-items: center; padding: 0 9px 0 7px;`;
const StatusCell = styled.div`width: ${(p) => p.$w}px; height: 22px; display: flex; align-items: center; justify-content: ${(p) => p.$j || "flex-start"}; padding-right: ${(p) => p.$pr || 0}px; background: ${(p) => (p.$on ? "#0067b0" : "none")}; flex: none;`;

/* ---------- taskbar ---------- */
const Taskbar = styled.div`height: 40px; flex: none; display: flex; border-top: 1px solid #3b4a5e; background: linear-gradient(90deg, #8292a9 0 58px, #a5bddb 64px 1100px, #8292a9 1150px);`;
const Start = styled.div`width: 60px; display: flex; justify-content: center; align-items: center; padding-right: 6px;`;
const Task = styled.div`
  width: ${(p) => p.$w}px; margin-right: ${(p) => p.$mr || 3}px; height: 39px; display: flex; align-items: center; justify-content: center; flex: none;
  ${(p) => !p.$plain && css`border: 1px solid #46566c; border-top-color: #6d7d92; border-radius: 2px; box-shadow: inset 0 0 0 1px rgba(255,255,255,.55);
  background: linear-gradient(160deg, ${p.$on ? "#e2eaf4, #bccde3" : "#ccd9ea, #a9bfda 60%, #b3c7e0"});`}
  ${(p) => p.$stack && css`box-shadow: inset 0 0 0 1px rgba(255,255,255,.55), 3px 0 0 -1px #bccde2, 4px 0 0 0 #6f8199;`}
`;
const Tray = styled.div`margin-left: auto; display: flex; align-items: center; gap: 10px; color: #fff;`;
const Clock = styled.div`width: 64px; height: 34px; margin: 0 -2px 0 5px; display: flex; flex-direction: column; align-items: center; line-height: 17px;`;
const ShowDesktop = styled.div`width: 15px; height: 39px; border: 1px solid #4b586a; background: linear-gradient(135deg, #a6b4c6, #5b6b80); box-shadow: inset 1px 1px 0 #aebbcc;`;

const Orb = () => (
  <Svg width="38" height="38" viewBox="0 0 38 38"><defs><radialGradient id="orb" cx=".5" cy=".95" r=".9"><stop offset="0" stopColor="#3fd3f7" /><stop offset=".45" stopColor="#1d6ea8" /><stop offset="1" stopColor="#123c62" /></radialGradient></defs>
    <circle cx="19" cy="19" r="17.500" fill="url(#orb)" stroke="#35506b" /><path d="M4 15Q8 4 19 3t15 12q-15 5-30 0z" fill="#fff" opacity=".3" />
    <path d="M10 11.500q4.500-2.500 8-.5l-1.500 8q-4-2-8.500 0z" fill="#ef6427" /><path d="M20 12q4.500 2 9-.5l-2 8q-4 2-8.500.5z" fill="#8fc83c" /><path d="M8 21q4-2 8 0l-1.500 7.500q-4-2-8 0z" fill="#4aa5e8" /><path d="M18 22q4 2 8.500-.5l-2 8q-4 2-8 0z" fill="#fbcb2d" /></Svg>
);
const IE = () => (<Svg width="30" height="30"><defs><linearGradient id="ie" x2="0" y2="1"><stop offset="0" stopColor="#0f4f8e" /><stop offset="1" stopColor="#35a8e6" /></linearGradient></defs><path d="M8 15h18v4.500H8z" fill="#1c74b8" /><path d="M24.500 20.500A9.500 9.500 0 1 1 25 15.500" fill="none" stroke="url(#ie)" strokeWidth="5.500" /><path d="M20 4Q32-3 28 9M7 11Q-3 25 3 29t18-10Q31 8 29.500 2.500" fill="none" stroke="#f2b92c" strokeWidth="2.200" /></Svg>);
const Explorer = () => (<Svg width="33" height="30"><path d="M1 27V4l2-3h9l2 3h16v23z" fill="#efd36f" stroke="#bd9b3a" /><path d="M3 8h27v18H3z" fill="#fbe9a6" /><path d="M5 2h4M20 5h5" stroke="#3a7" strokeWidth="2" /><path d="M12 5h4" stroke="#c33" strokeWidth="2" /><path d="M6 30V19h21v11h-5v-6H11v6z" fill="#86c8e8" stroke="#4d9cc4" /></Svg>);
const Wmp = () => (<Svg width="28" height="26"><path d="M8 1h17v21H8z" fill="#6cb3dc" /><path d="M4 2h17v22H4z" fill="#88c3e5" stroke="#5393bd" /><path d="M0 1h17v22H0z" fill="#9dcfec" stroke="#5393bd" /><circle cx="11" cy="13" r="8.500" fill="#f07d1d" stroke="#cf5f0b" /><path d="M8 8l8 5-8 5z" fill="#fff" /></Svg>);
const Chrome = () => (<Svg width="30" height="30" viewBox="-15 -15 30 30"><circle r="14.500" fill="#f9cd3c" /><path d="M-12.600-7.200A14.500 14.500 0 0 0 0 14.500L6.200 3.500-6.200 3.500z" fill="#21a05a" /><path d="M12.600-7.200H0L-6 3.500-12.600-7.200A14.500 14.500 0 0 1 12.600-7.200z" fill="#dc4437" /><circle r="6.800" fill="#fff" /><circle r="5.500" fill="#4a85ee" /></Svg>);
const DocApp = () => (<Svg width="24" height="30"><path d="M1 1h16l6 6v22H1z" fill="#fff" stroke="#999" /><path d="M17 1v6h6" fill="#ddd" stroke="#aaa" /><path d="M3 18q0 8 7.500 8T18 18v-4h3l-5-6-5 6h3v2l-4-1q-2 3-7 3z" fill="#1c91d0" /><circle cx="10.500" cy="20" r="2.500" fill="#fff" /></Svg>);
const DX = () => (<Svg width="31" height="31"><circle cx="15.500" cy="15.500" r="15.500" fill="#d9262e" /><text x="15.500" y="21" textAnchor="middle" fontFamily="Open Sans" fontWeight="800" fontSize="15" textLength="22" lengthAdjust="spacingAndGlyphs" fill="#fff">DX</text></Svg>);
const Calc = () => (<Svg width="29" height="30"><rect x=".5" y=".5" width="28" height="29" rx="2" fill="#d9edf9" stroke="#6fa2c4" /><path d="M3 3h23v3H3z" fill="#f3b562" /><path d="M3 6h23v6H3z" fill="#cfe4d9" /><text x="20" y="12" fontSize="7" fontFamily="Liberation Mono" fill="#555">0</text>{[15, 19, 23, 26.5].map((y) => [3, 8, 13, 18, 23].map((x) => <rect key={x + "-" + y} x={x} y={y} width="3.500" height="2.300" fill={x === 23 && y > 20 ? "#f0a030" : "#78acd0"} />))}</Svg>);
const OutlookTask = () => (<Svg width="31" height="31"><path d="M14 8h16v15H14z" fill="#fff" stroke="#0072c6" strokeWidth="1.500" /><path d="m15 10 8 7 7-7" fill="none" stroke="#0072c6" strokeWidth="1.500" /><path d="M0 3 18 0v29L0 26z" fill="#0072c6" /><ellipse cx="9" cy="15" rx="3.800" ry="4.500" fill="none" stroke="#fff" strokeWidth="2.800" /><path d="m24 18 7 12.500H17z" fill="#edb877" /><path d="M24 22v4.500M24 28v1.500" stroke="#444" strokeWidth="1.800" /></Svg>);
const RunApp = () => (<Svg width="30" height="20"><path d="M5 1h24l-4 18H1z" fill="#e3e8ee" stroke="#8a98a8" /><path d="M-1 1h29l-1 3H1z" fill="#5a90d0" /><path d="M10 7.500h14l-2 8H8z" fill="#fff" stroke="#2a5fc0" strokeWidth="2" /><path d="M11 9h7l-1 3h-6.500z" fill="#2a5fc0" /></Svg>);
const Paint = () => (<Svg width="32" height="30"><path d="M1 20Q0 8 14 6q12-1 14 7 1 7-4 8-4 0-4 3 0 4-6 5Q2 30 1 20z" fill="#c5dff0" stroke="#7c9fb8" /><circle cx="6" cy="17" r="2.600" fill="#e34a3c" /><circle cx="11" cy="12" r="2.600" fill="#57b947" /><circle cx="17.500" cy="10" r="2.600" fill="#f2c230" /><circle cx="14" cy="18.500" r="2" fill="#fff" stroke="#789" /><path d="M26 5 16 29" stroke="#d87b28" strokeWidth="2.600" /><path d="m24 7 1-7 5 2-1 3z" fill="#a3744a" /></Svg>);
const Swirl = () => (<Svg width="32" height="32"><path d="M0 0h32v32H0z" fill="#fff" /><circle cx="20" cy="9" r="7.500" fill="#1414ec" /><path d="M16 7q4-3 9 0v6q-5-2-9 0z" fill="#e8202a" /><path d="M16 9h9M16 11h9" stroke="#1414ec" strokeWidth=".7" /><path d="M15 1Q7 5 11 13t17 5M10 3Q4 10 10 19t17 5M5 9Q3 20 11 26t12 3M5 20Q9 31 22 30.500" fill="none" stroke="#1414d8" strokeWidth="1.800" /><path d="M13 3q-7 6 0 13M8 8q-3 8 5 14M4 13q0 8 6 13" fill="none" stroke="#777" /></Svg>);

function StatusBar() {
  return (
    <Status>
      <Text w={63}>ITEMS: 2 426</Text><Spacer />
      <Text w={252}>THIS FOLDER WAS LAST UPDATED ON 2018/02/13.</Text>
      <StatusCell $w={37} $j="flex-end" $pr={6}><Svg width="8" height="12"><path d="M0 .5h8v4H0z" fill="none" stroke="#fff" /><path d="M2 2.500h4M2 5h2v7H2zM5 5h1.500v4H5z" fill="#fff" stroke="#fff" strokeWidth=".6" /></Svg></StatusCell>
      <Text w={91}>NEED PASSWORD</Text>
      <StatusCell $w={19} />
      <StatusCell $w={37} $on $j="center"><Svg width="14" height="12"><path d="M.5.5h13v11H.5z" fill="none" stroke="#fff" /><path d="M0 0h5v12H0z" fill="#fff" /></Svg></StatusCell>
      <StatusCell $w={39} $j="center"><Svg width="13" height="12"><path d="M.5.5h5l1 1 1-1h5v9h-5l-1 1-1-1h-5zM6.500 1v11" fill="none" stroke="#fff" /><path d="M2 3h3M2 5h3M2 7h3M8 3h3M8 5h3M8 7h3" stroke="#fff" strokeWidth=".8" /></Svg></StatusCell>
      <StatusCell $w={141} $j="center" $pr={10}><Svg width="122" height="12"><path d="M0 6h6M114 6h8M118 2v8" stroke="#fff" strokeWidth="2" /><path d="M10 6.500h100" stroke="#fff" /><path d="M58 1h4v10h-4z" fill="#fff" /></Svg></StatusCell>
      <StatusCell $w={28} $j="flex-end"><Text w={28}>100%</Text></StatusCell>
    </Status>
  );
}

function WindowsBar() {
  return (
    <Taskbar>
      <Start><Orb /></Start>
      <Task $w={54} $mr={7} $stack $on><IE /></Task>
      <Task $w={52} $mr={9} $stack $on><Explorer /></Task>
      <Task $w={60} $mr={3} $plain><Wmp /></Task>
      <Task $w={60} $mr={2}><Chrome /></Task>
      <Task $w={60} $mr={2}><DocApp /></Task>
      <Task $w={60} $mr={2}><DX /></Task>
      <Task $w={60} $mr={2}><Calc /></Task>
      <Task $w={55} $mr={7} $stack $on><OutlookTask /></Task>
      <Task $w={60} $mr={2}><RunApp /></Task>
      <Task $w={55} $mr={7} $stack><Paint /></Task>
      <Task $w={60}><Swirl /></Task>
      <Tray>
        <Svg width="8" height="5"><path d="M0 5h8L4 0z" fill="#fff" /></Svg>
        <Svg width="16" height="15"><path d="M1.500 0v15" stroke="#fff" strokeWidth="2" /><path d="M3 1q4-2 8 1v6q-4-2-8 0z" fill="#fff" stroke="#555" strokeWidth=".5" /><circle cx="11.500" cy="10.500" r="4.500" fill="#d8352c" /><path d="m9.500 8.500 4 4m0-4-4 4" stroke="#fff" strokeWidth="1.500" /></Svg>
        <Svg width="15" height="15"><path d="M6 13.500H1V2.500h7V5M3 2V.5h3V2" fill="none" stroke="#fff" strokeWidth="1.500" /><path d="M6 6h8v3q0 3-4 3t-4-3z" fill="#fff" /><path d="M8 3v3M12 3v3M10 11v4" stroke="#fff" strokeWidth="1.500" /></Svg>
        <Svg width="15" height="14"><path d="M4 4h10.500v7H4zM6 13.500h7" fill="#607088" stroke="#fff" strokeWidth="1.400" /><path d="M0 1h5v4H0zM2.500 5v8" fill="#fff" stroke="#fff" /></Svg>
        <Svg width="13" height="14"><path d="M0 4.500h3l3.500-4v13l-3.500-4H0z" fill="#fff" /><path d="M9 4.500q1.500 2.500 0 5M11 2.500q3 4.500 0 9" fill="none" stroke="#fff" /></Svg>
        <Clock><Text w={49} $size={12}>12:39 PM</Text><Text w={58} $size={12}>2018/02/14</Text></Clock>
        <ShowDesktop />
      </Tray>
    </Taskbar>
  );
}

export default function App() {
  return (
    <Shell>
      <GlobalStyle />
      <Title />
      <Tabs>
        <Tab $w={59} $kind="file"><Text w={21}>FILE</Text></Tab>
        <Tab $w={62} $gap={4} $kind="on"><Text w={35}>HOME</Text></Tab>
        <Tab $w={113}><Text w={83}>SEND / RECEIVE</Text></Tab>
        <Tab $w={70}><Text w={42}>FOLDER</Text></Tab>
        <Tab $w={57}><Text w={27}>VIEW</Text></Tab>
      </Tabs>
      <RibbonBar />
      <Notice>
        <Svg width="23" height="20"><path d="M11.500 0 23 20H0z" fill="#edbd7e" /><path d="M11.500 6v7M11.500 15v3" stroke="#444" strokeWidth="2.400" /></Svg>
        <NoticeText><Text w={99}>ADD-IN PROBLEM</Text><Text w={341}>A problem was detected with an add-in and it has been disabled.</Text>
          <NoticeButton><Text w={127}>View Disabled Add-ins...</Text></NoticeButton></NoticeText>
        <Cross w={9} />
      </Notice>
      <Main><NavPane /><MessageList /><ReadingPane /></Main>
      <StatusBar />
      <WindowsBar />
    </Shell>
  );
}
